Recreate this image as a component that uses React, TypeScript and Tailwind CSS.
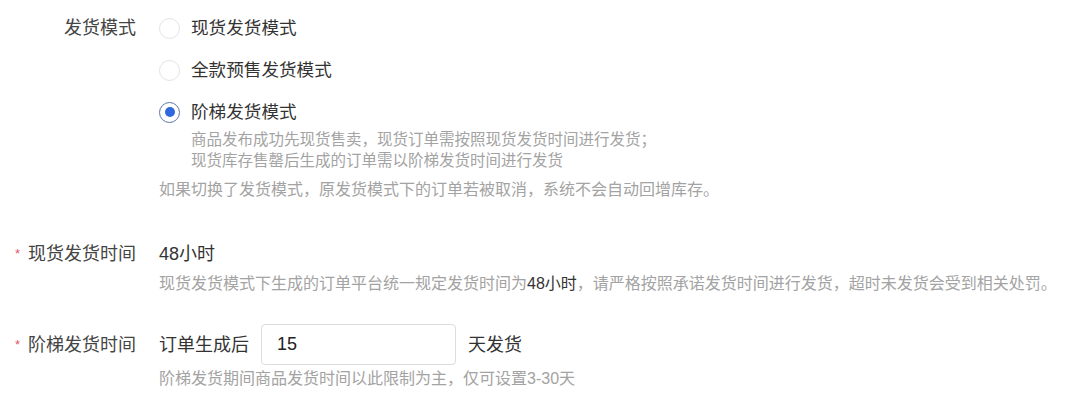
import React from 'react';

const font = { fontFamily: '"Liberation Sans", "Noto Sans CJK SC", sans-serif' };

function Radio({ checked, label }: { checked?: boolean; label: string }) {
  return (
    <div className="flex items-center h-[22px]">
      <span
        className={
          'flex items-center justify-center w-[21px] h-[21px] rounded-full bg-white ' +
          (checked ? 'border-[1.5px] border-[#5d74a6]' : 'border border-[#e3e3e3]')
        }
      >
        {checked && <span className="w-[10px] h-[10px] rounded-full bg-[#2f67df]" />}
      </span>
      <span className="ml-[11px] text-[17.6px] leading-[22px] text-[#333]">{label}</span>
    </div>
  );
}

function Label({ text, required }: { text: string; required?: boolean }) {
  return (
    <div className="w-[136px] shrink-0 flex justify-end items-center text-[18px] leading-[22px] text-[#444]">
      {required && <span className="text-[#e2556b] text-[13px] mr-[8px]">*</span>}
      <span>{text}</span>
    </div>
  );
}

export default function App() {
  return (
    <div className="w-[1080px] h-[402px] bg-white pt-[17px] overflow-hidden" style={font}>
      {/* 发货模式 */}
      <div className="flex items-start">
        <Label text="发货模式" />
        <div className="ml-[23px] flex flex-col">
          <div className="flex flex-col gap-[20px]">
            <Radio label="现货发货模式" />
            <Radio label="全款预售发货模式" />
            <Radio checked label="阶梯发货模式" />
          </div>
          <div className="mt-[5.5px] ml-[32px] text-[15.5px] leading-[21px] text-[#a3a3a3]">
            <div>商品发布成功先现货售卖，现货订单需按照现货发货时间进行发货；</div>
            <div>现货库存售罄后生成的订单需以阶梯发货时间进行发货</div>
          </div>
          <div className="mt-[8px] text-[16px] leading-[21px] text-[#a3a3a3]">
            如果切换了发货模式，原发货模式下的订单若被取消，系统不会自动回增库存。
          </div>
        </div>
      </div>

      {/* 现货发货时间 */}
      <div className="flex items-start mt-[43.5px]">
        <Label text="现货发货时间" required />
        <div className="ml-[23px] flex flex-col">
          <div className="text-[18px] leading-[22px] text-[#333]">48小时</div>
          <div className="mt-[7.5px] text-[16px] leading-[21px] text-[#a3a3a3]">
            现货发货模式下生成的订单平台统一规定发货时间为<span className="text-[#333]">48小时</span>，请严格按照承诺发货时间进行发货，超时未发货会受到相关处罚。
          </div>
        </div>
      </div>

      {/* 阶梯发货时间 */}
      <div className="flex items-start mt-[30.5px]">
        <div className="h-[41px] flex items-center">
          <Label text="阶梯发货时间" required />
        </div>
        <div className="ml-[23px] flex flex-col">
          <div className="flex items-center h-[41px]">
            <span className="text-[18px] leading-[22px] text-[#333]">订单生成后</span>
            <input
              defaultValue="15"
              className="ml-[12px] w-[195px] h-[41px] border border-[#dcdcdc] rounded-[4px] px-[15px] text-[18px] text-[#222] outline-none"
              style={font}
            />
            <span className="ml-[12px] text-[18px] leading-[22px] text-[#333]">天发货</span>
          </div>
          <div className="mt-[2.5px] text-[16px] leading-[21px] text-[#a3a3a3]">
            阶梯发货期间商品发货时间以此限制为主，仅可设置3-30天
          </div>
        </div>
      </div>
    </div>
  );
}
